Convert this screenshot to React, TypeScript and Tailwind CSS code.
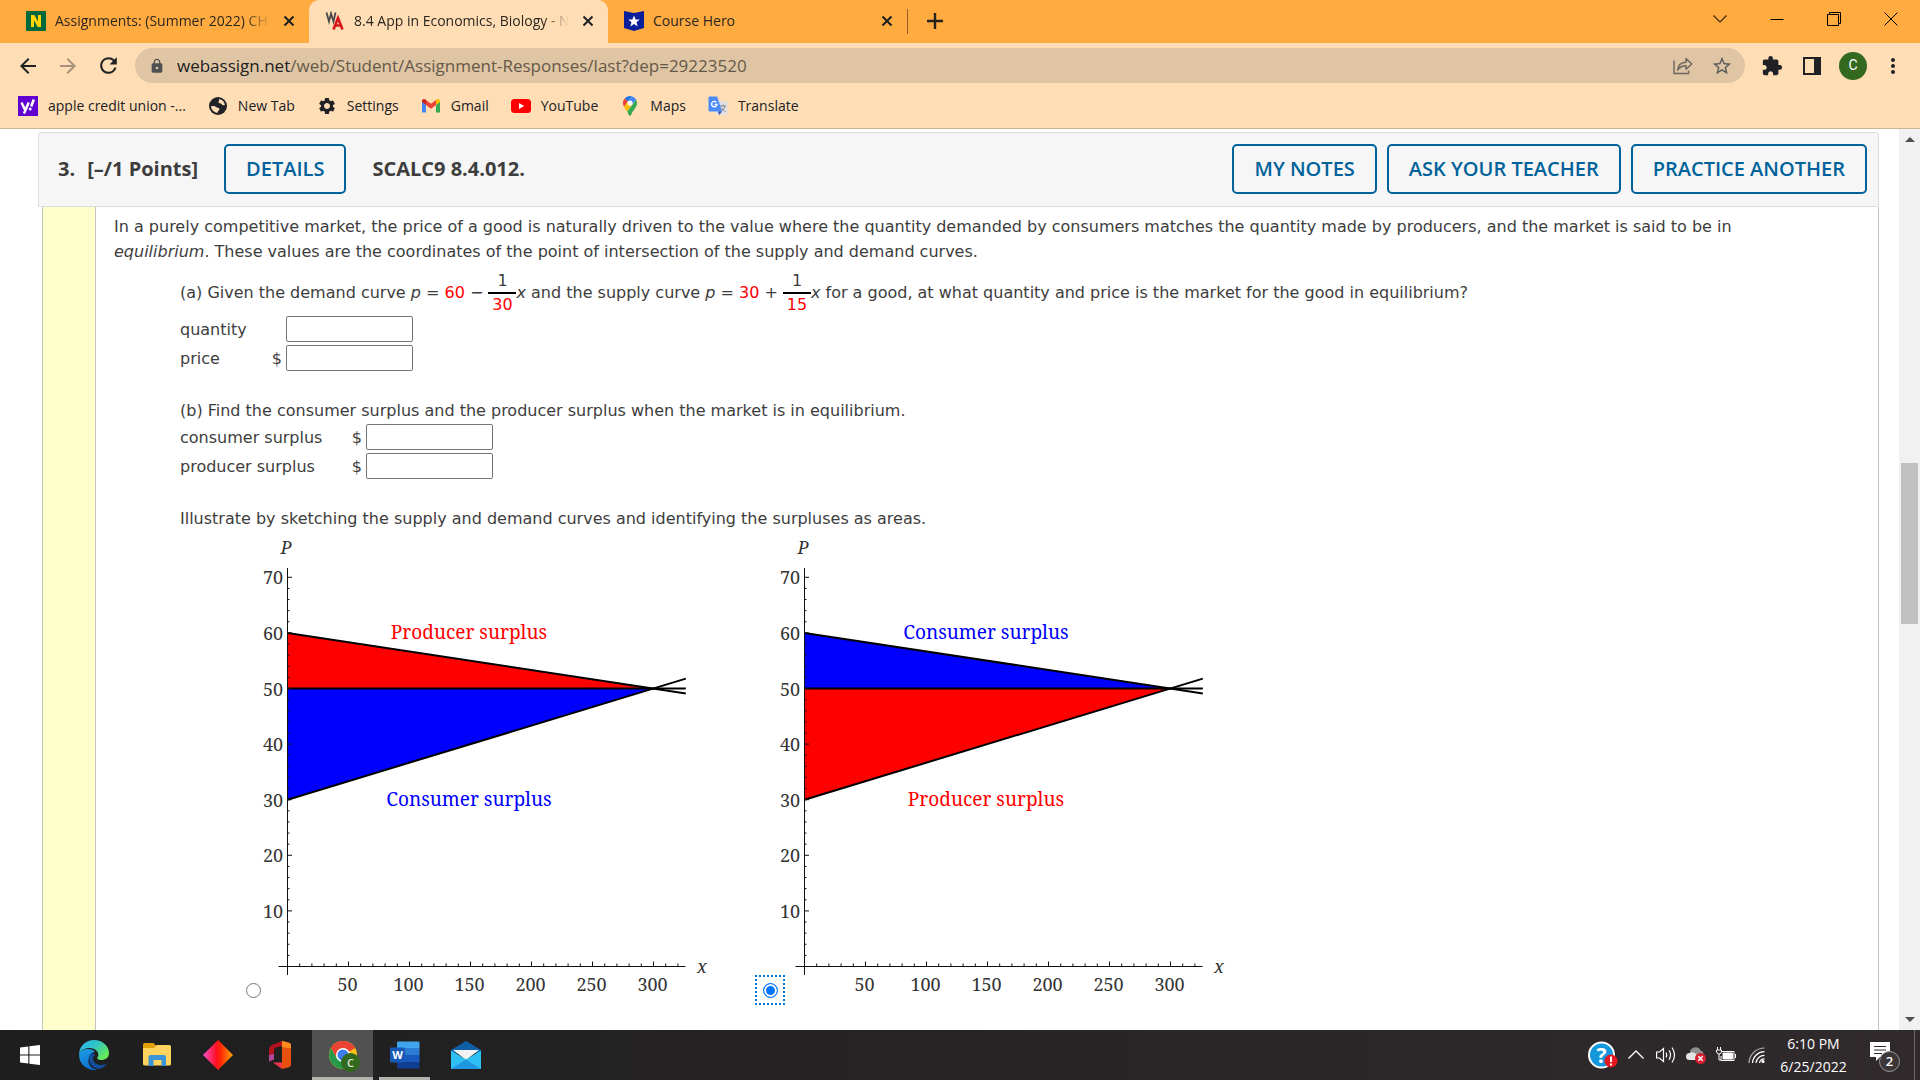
import { type ReactNode } from "react";
import {
  MdArrowBack,
  MdArrowForward,
  MdExtension,
  MdLock,
  MdMoreVert,
  MdRefresh,
  MdSettings,
  MdStarBorder
} from "react-icons/md";

const UI_FONT = "font-['Segoe_UI','Open_Sans',sans-serif]";
const BODY_FONT = "font-['Verdana','DejaVu_Sans',sans-serif]";

/* ---------- small logos ---------- */

function NLogo() {
  return (
    <svg viewBox="0 0 20 20" className="size-5 shrink-0">
      <rect width="20" height="20" rx="1" fill="#00683a" />
      <path d="M5 16V4h3.4l3.6 6.6V4h3v12h-3.3L8 9.3V16z" fill="#ffd200" />
    </svg>
  );
}

function WebAssignLogo() {
  return (
    <svg viewBox="0 0 20 20" className="size-5 shrink-0" fill="none">
      <path d="M1.500 1.500l2.500 9 2-8 2.500 8 2-9" stroke="#4a4a4a" strokeWidth="1.800" />
      <path d="M8.500 18.500L13 7l4.500 11.500M10.500 14.500h6" stroke="#d8151b" strokeWidth="2.600" />
    </svg>
  );
}

function CourseHeroLogo() {
  return (
    <svg viewBox="0 0 20 20" className="size-5 shrink-0">
      <path d="M0 0l10 2 10-2v17l-10 3-10-3z" fill="#0a1e9c" />
      <path d="M10 4.500l1.600 4h4.200l-3.300 2.700 1.200 4.200L10 13l-3.700 2.400 1.200-4.200-3.300-2.700h4.200z" fill="#fff" />
    </svg>
  );
}

function YahooLogo() {
  return (
    <svg viewBox="0 0 20 20" className="size-5 shrink-0" fill="none">
      <rect width="20" height="20" fill="#6001d2" />
      <path d="M3.500 6.500l3.400 7M10.700 6.500L6 17.500" stroke="#fff" strokeWidth="2.500" />
      <path d="M15.800 3.500l-2.600 7" stroke="#fff" strokeWidth="2.600" />
      <circle cx="12.200" cy="13" r="1.500" fill="#fff" />
    </svg>
  );
}

function GlobeIcon() {
  return (
    <svg viewBox="0 0 20 20" className="size-5 shrink-0">
      <circle cx="10" cy="10" r="9" fill="#202124" />
      <path d="M11 3a7 7 0 0 1 5.900 6c-1.400.6-2.600 0-3.400-1-.8-.9-2.500-.3-3-1.500-.5-1.300 1.200-1.600.5-3.500z" fill="#ffdeb6" />
      <path d="M3 10.300c2-.6 4-.3 5 .7 1 .9 3.500.5 3.400 2.300-.1 1.500-1.900 1.500-1.900 3.600A7 7 0 0 1 3 10.300z" fill="#ffdeb6" />
    </svg>
  );
}

function GmailLogo() {
  return (
    <svg viewBox="0 0 20 20" className="size-5 shrink-0">
      <path d="M1 5v11.500h4V9z" fill="#4285f4" />
      <path d="M19 5v11.500h-4V9z" fill="#34a853" />
      <path d="M1 5c0-2 2-2.600 3.500-1.500L5 4v5L1 6z" fill="#c5221f" />
      <path d="M19 5c0-2-2-2.600-3.500-1.500L15 4v5l4-3z" fill="#fbbc04" />
      <path d="M5 4l5 3.800L15 4v5l-5 3.800L5 9z" fill="#ea4335" />
    </svg>
  );
}

function YouTubeLogo() {
  return (
    <svg viewBox="0 0 20 20" className="size-5 shrink-0">
      <rect y="3" width="20" height="14" rx="3.500" fill="#f00" />
      <path d="M8 7l5.200 3L8 13z" fill="#fff" />
    </svg>
  );
}

function MapsLogo() {
  return (
    <svg viewBox="0 0 20 20" className="size-5 shrink-0">
      <path d="M10 0a7 7 0 0 0-5.400 2.500L8 5.400 12.200.4A7 7 0 0 0 10 0z" fill="#1a73e8" />
      <path d="M4.600 2.500A7 7 0 0 0 3 7c0 1.500.4 2.800 1 3.900L8 5.400z" fill="#ea4335" />
      <path d="M12.200.4L8 5.400a2.700 2.700 0 0 1 4 3.400L16.200 3.800a7 7 0 0 0-4-3.400z" fill="#4285f4" />
      <path d="M4 10.900c.8 1.600 2 2.800 3.200 4.600L12 8.800A2.700 2.700 0 0 1 8 5.400z" fill="#fbbc04" />
      <path d="M16.200 3.800L7.200 15.500c1.300 2 1.600 4.500 2.800 4.500s1.500-2.500 2.800-4.500C14.700 12.700 17 10.800 17 7c0-1.200-.3-2.300-.8-3.200z" fill="#34a853" />
      <circle cx="10" cy="7" r="2.600" fill="#fff" />
    </svg>
  );
}

function TranslateLogo() {
  return (
    <svg viewBox="0 0 20 20" className="size-5 shrink-0" fill="none">
      <rect x="8" y="5" width="11.500" height="14" rx="1" fill="#dfe1e5" />
      <path d="M12 10h6M15 8.500V10M17 10c-.5 2.500-2.500 4.500-4 5.500M13.500 12c1 1.500 2.500 3 4 3.500" stroke="#7f868c" />
      <path d="M1.500.5h7.700L14 15.500H1.500a1 1 0 0 1-1-1v-13a1 1 0 0 1 1-1z" fill="#4c8bf5" />
      <path d="M10 15.500h4L11.300 19z" fill="#3748ac" />
      <path d="M8.300 6.300A2.700 2.700 0 1 0 9 8.300H6.500" stroke="#fff" strokeWidth="1.300" />
    </svg>
  );
}

/* ---------- browser chrome ---------- */

function CloseIcon() {
  return (
    <svg viewBox="0 0 12 12" className="size-3" stroke="#1f2023" strokeWidth="2">
      <path d="M1.500 1.500l9 9M10.500 1.500l-9 9" />
    </svg>
  );
}

type TabProps = { icon: ReactNode; title: string; active?: boolean; fade?: boolean };

function Tab({ icon, title, active, fade }: TabProps) {
  return (
    <div
      className={`flex h-[43px] w-[299px] items-center gap-[9px] pb-[2px] pl-4 pr-[14px] ${
        active ? "rounded-t-[10px] bg-[#ffdeb6]" : ""
      }`}
    >
      {icon}
      <span
        className={`min-w-0 flex-1 overflow-hidden whitespace-nowrap text-[14px] leading-5 text-[#2b2620] ${
          fade ? "[mask-image:linear-gradient(to_right,black_88%,transparent)]" : ""
        }`}
      >
        {title}
      </span>
      <button aria-label="Close tab" className="ml-1">
        <CloseIcon />
      </button>
    </div>
  );
}

function TabStrip() {
  return (
    <div className="flex h-[43px] items-center bg-[#ffab40]">
      <div className="w-[10px] shrink-0" />
      <Tab icon={<NLogo />} title="Assignments: (Summer 2022) CHI" fade />
      <Tab icon={<WebAssignLogo />} title="8.4 App in Economics, Biology - N" active fade />
      <Tab icon={<CourseHeroLogo />} title="Course Hero" />
      <div className="h-[25px] w-px bg-[#8f6126]" />
      <button aria-label="New tab" className="ml-[19px] pb-[2px]">
        <svg viewBox="0 0 16 16" className="size-4" stroke="#26221c" strokeWidth="2.400">
          <path d="M8 0v16M0 8h16" />
        </svg>
      </button>
      <div className="ml-auto flex pb-[6px]">
        <button aria-label="Search tabs" className="flex w-[57px] justify-center">
          <svg viewBox="0 0 14 14" className="size-[14px]" fill="none" stroke="#3a2a14" strokeWidth="1.200">
            <path d="M.5 3.500L7 10l6.500-6.500" />
          </svg>
        </button>
        <button aria-label="Minimize" className="flex w-[57px] justify-center">
          <svg viewBox="0 0 14 14" className="size-[14px]" stroke="#000">
            <path d="M.5 7.500h13" />
          </svg>
        </button>
        <button aria-label="Restore" className="flex w-[57px] justify-center">
          <svg viewBox="0 0 14 14" className="size-[14px]" fill="none" stroke="#000">
            <path d="M.5 2.500h11v11H.5zM2.500 2.500v-2h11v11h-2" />
          </svg>
        </button>
        <button aria-label="Close" className="flex w-[58px] justify-center">
          <svg viewBox="0 0 14 14" className="size-[14px]" stroke="#000">
            <path d="M.5.5l13 13M13.500.5l-13 13" />
          </svg>
        </button>
      </div>
    </div>
  );
}

function Toolbar() {
  return (
    <div className="flex h-[45px] items-center pl-4 pr-[15px] text-[#202124]">
      <button aria-label="Back">
        <MdArrowBack size={24} />
      </button>
      <button aria-label="Forward" className="ml-4 text-[#a8917a]">
        <MdArrowForward size={24} />
      </button>
      <button aria-label="Reload" className="ml-4">
        <MdRefresh size={25} />
      </button>
      <div className="ml-[14px] flex h-[35px] min-w-0 flex-1 items-center rounded-full bg-[#dfc5a3] pl-[14px] pr-3">
        <MdLock size={16} className="text-[#4f5054]" />
        <div className="ml-3 flex-1 whitespace-nowrap text-[17px] leading-6 text-[#65594a]">
          <span className="text-[#202124]">webassign.net</span>
          /web/Student/Assignment-Responses/last?dep=29223520
        </div>
        <button aria-label="Share this page">
          <svg viewBox="0 0 20 20" className="size-5" fill="none" stroke="#6a6661" strokeWidth="1.400">
            <path d="M1 4.500v13h14.500v-3" />
            <path d="M4.500 14C5 9 8 6.500 13 6.200V2.500l5.800 5.500-5.800 5.300V9.800c-3.500 0-6 1-8.500 4.200z" strokeLinejoin="round" />
          </svg>
        </button>
        <button aria-label="Bookmark this page" className="ml-[18px]">
          <MdStarBorder size={22} className="text-[#5b5b5e]" />
        </button>
      </div>
      <button aria-label="Extensions" className="ml-4">
        <MdExtension size={22} />
      </button>
      <button aria-label="Side panel" className="ml-5">
        <svg viewBox="0 0 18 18" className="size-[18px]">
          <path d="M0 0h18v18H0zM2 2v14h9V2z" fill="#202124" fillRule="evenodd" />
        </svg>
      </button>
      <button
        aria-label="Profile"
        className="ml-[18px] flex size-7 items-center justify-center rounded-full bg-[#33691e] text-[14px] text-white font-[Roboto,sans-serif]"
      >
        C
      </button>
      <button aria-label="Menu" className="ml-[14px]">
        <MdMoreVert size={24} />
      </button>
    </div>
  );
}

const bookmarks = [
  { label: "apple credit union -...", icon: <YahooLogo /> },
  { label: "New Tab", icon: <GlobeIcon /> },
  { label: "Settings", icon: <MdSettings size={20} /> },
  { label: "Gmail", icon: <GmailLogo /> },
  { label: "YouTube", icon: <YouTubeLogo /> },
  { label: "Maps", icon: <MapsLogo /> },
  { label: "Translate", icon: <TranslateLogo /> }
];

function BookmarksBar() {
  return (
    <nav className="flex h-[41px] items-center gap-[22px] border-b border-[#cdb497] pb-1 pl-[18px] text-[#202124]">
      {bookmarks.map(b => (
        <a key={b.label} href="#" className="flex items-center gap-[10px] whitespace-nowrap text-[14px] leading-5">
          {b.icon}
          {b.label}
        </a>
      ))}
    </nav>
  );
}

/* ---------- question ---------- */

function OutlineButton({ children }: { children: ReactNode }) {
  return (
    <button className="h-[50px] rounded-[5px] border-2 border-[#00629b] px-5 text-[20px] font-semibold text-[#00629b]">
      {children}
    </button>
  );
}

function QuestionHeader() {
  return (
    <header className="flex h-[75px] items-center gap-[10px] rounded-t-[3px] border border-[#dcdcdc] bg-[#f6f6f6] pb-[2px] pl-[19px] pr-[11px] font-['Open_Sans',sans-serif] text-[20px] text-[#3d3d3d]">
      <h2 className="flex gap-3 whitespace-nowrap pr-4 font-bold">
        <span>3.</span>
        <span>[–/1 Points]</span>
      </h2>
      <OutlineButton>DETAILS</OutlineButton>
      <span className="flex-1 whitespace-nowrap pl-4 font-bold">SCALC9 8.4.012.</span>
      <OutlineButton>MY NOTES</OutlineButton>
      <OutlineButton>ASK YOUR TEACHER</OutlineButton>
      <OutlineButton>PRACTICE ANOTHER</OutlineButton>
    </header>
  );
}

function Fraction({ top, bottom }: { top: string; bottom: string }) {
  return (
    <span className="inline-flex w-7 flex-col text-center align-middle leading-[22px]">
      <span className="border-b-2 border-black">{top}</span>
      <span className="text-[#ff0000]">{bottom}</span>
    </span>
  );
}

type FieldProps = { id: string; label: string; dollar?: boolean; wide?: boolean };

function Field({ id, label, dollar, wide }: FieldProps) {
  return (
    <div className="flex h-[26px] items-center">
      <div className={`flex justify-between pr-1 ${wide ? "w-[186px]" : "w-[106px]"}`}>
        <label htmlFor={id}>{label}</label>
        {dollar && <span>$</span>}
      </div>
      <input id={id} type="text" className="h-[26px] w-[127px] rounded-[2px] border border-[#767676] bg-white px-1" />
    </div>
  );
}

const xScale = (v: number) => 27.5 + v * 1.22;
const yScale = (v: number) => 431.5 - v * 5.56;
const range = (from: number, to: number, step: number) =>
  Array.from({ length: Math.floor((to - from) / step) + 1 }, (_, i) => from + i * step);

type PlotProps = { topLabel: string; topColor: string; bottomLabel: string; bottomColor: string };

function SurplusPlot({ topLabel, topColor, bottomLabel, bottomColor }: PlotProps) {
  const points = (list: number[][]) => list.map(([x, y]) => `${xScale(x)},${yScale(y)}`).join(" ");

  return (
    <svg
      viewBox="0 0 452 470"
      className="h-[470px] w-[452px] shrink-0 font-['Noto_Serif','DejaVu_Serif',serif] text-[18px]"
      fill="#333"
    >
      <polygon points={points([[0, 60], [300, 50], [0, 50]])} fill={topColor} />
      <polygon points={points([[0, 50], [300, 50], [0, 30]])} fill={bottomColor} />
      <g stroke="#000" strokeWidth="2">
        <polyline points={points([[0, 60], [326.5, 49.1]])} />
        <polyline points={points([[0, 50], [326.5, 50]])} />
        <polyline points={points([[0, 30], [326.5, 51.77]])} />
      </g>
      <g stroke="#111">
        <path d="M27.500 33v407M18.500 431.500h407" />
        {range(2, 70, 2).map(v => (
          <path key={v} d={`M27.500 ${yScale(v)}h${v % 10 === 0 ? 4.5 : 2}`} />
        ))}
        {range(10, 320, 10).map(v => (
          <path key={v} d={`M${xScale(v)} 431.500v${v % 50 === 0 ? -5 : -3}`} />
        ))}
      </g>
      {range(10, 70, 10).map(v => (
        <text key={v} x="23" y={yScale(v) + 7} textAnchor="end">
          {v}
        </text>
      ))}
      {range(50, 300, 50).map(v => (
        <text key={v} x={xScale(v) - 1} y="456" textAnchor="middle">
          {v}
        </text>
      ))}
      <text x="26" y="19" textAnchor="middle" fontStyle="italic">
        P
      </text>
      <text x="442" y="438" textAnchor="middle" fontStyle="italic">
        x
      </text>
      <text x="209" y="104" textAnchor="middle" fontSize="19" fill={topColor}>
        {topLabel}
      </text>
      <text x="209" y="271" textAnchor="middle" fontSize="19" fill={bottomColor}>
        {bottomLabel}
      </text>
    </svg>
  );
}

const RED = "#ff0000";
const BLUE = "#0000ff";

function Question() {
  return (
    <main className={`min-w-0 flex-1 overflow-hidden pl-[38px] pr-[20px] pt-[3px] ${BODY_FONT}`}>
      <QuestionHeader />
      <div className="ml-1 flex border-x border-[#c4c4c4] text-[16px] leading-[25px] text-[#3d3d3d]">
        <div className="w-[53px] shrink-0 border-r border-[#c4c4c4] bg-[#ffffcc]" />
        <div className="min-w-0 flex-1 pb-10 pl-[18px] pr-[72px] pt-[7px]">
          <p>
            In a purely competitive market, the price of a good is naturally driven to the value where the quantity
            demanded by consumers matches the quantity made by producers, and the market is said to be in{" "}
            <i>equilibrium</i>. These values are the coordinates of the point of intersection of the supply and demand
            curves.
          </p>
          <div className="ml-[66px] pt-[6px]">
            <p>
              (a) Given the demand curve <i>p</i> = <span className="text-[#ff0000]">60</span> −{" "}
              <Fraction top="1" bottom="30" />
              <i>x</i> and the supply curve <i>p</i> = <span className="text-[#ff0000]">30</span> +{" "}
              <Fraction top="1" bottom="15" />
              <i>x</i> for a good, at what quantity and price is the market for the good in equilibrium?
            </p>
            <div className="flex flex-col gap-[3px]">
              <Field id="quantity" label="quantity" />
              <Field id="price" label="price" dollar />
            </div>
            <p className="mt-[27px]">
              (b) Find the consumer surplus and the producer surplus when the market is in equilibrium.
            </p>
            <div className="mt-px flex flex-col gap-[3px]">
              <Field id="consumer" label="consumer surplus" dollar wide />
              <Field id="producer" label="producer surplus" dollar wide />
            </div>
            <p className="mt-[27px]">
              Illustrate by sketching the supply and demand curves and identifying the surpluses as areas.
            </p>
            <div className="mt-1 flex pl-[58px]">
              <label className="flex w-[517px] items-end">
                <span className="flex size-[30px] shrink-0 items-center justify-center">
                  <input
                    type="radio"
                    name="sketch"
                    className="size-[15px] appearance-none rounded-full border border-[#767676] bg-white"
                  />
                </span>
                <span className="-ml-2">
                  <SurplusPlot
                    topLabel="Producer surplus"
                    topColor={RED}
                    bottomLabel="Consumer surplus"
                    bottomColor={BLUE}
                  />
                </span>
              </label>
              <label className="flex w-[517px] items-end">
                <span className="flex size-[30px] shrink-0 items-center justify-center border-2 border-dotted border-[#0078d7]">
                  <input
                    type="radio"
                    name="sketch"
                    defaultChecked
                    className="size-[15px] appearance-none rounded-full border border-[#0075ff] bg-[#0075ff] shadow-[inset_0_0_0_2px_white]"
                  />
                </span>
                <span className="-ml-2">
                  <SurplusPlot
                    topLabel="Consumer surplus"
                    topColor={BLUE}
                    bottomLabel="Producer surplus"
                    bottomColor={RED}
                  />
                </span>
              </label>
            </div>
          </div>
        </div>
      </div>
    </main>
  );
}

function ScrollBar() {
  return (
    <div className="flex w-[21px] shrink-0 flex-col items-center bg-[#f1f1f1] py-2">
      <svg viewBox="0 0 10 5" className="h-[5px] w-[10px]" fill="#505050">
        <path d="M5 0l5 5H0z" />
      </svg>
      <div className="w-full grow-[320] basis-0" />
      <div className="w-[17px] grow-[160] basis-0 bg-[#c1c1c1]" />
      <div className="w-full grow-[391] basis-0" />
      <svg viewBox="0 0 10 5" className="h-[5px] w-[10px]" fill="#505050">
        <path d="M0 0h10L5 5z" />
      </svg>
    </div>
  );
}

/* ---------- taskbar ---------- */

function WindowsIcon() {
  return (
    <svg viewBox="0 0 20 20" className="size-5" fill="#fff">
      <path d="M0 2.500L8.300 1.400v8.100H0zM9.400 1.200L20 0v9.500H9.400zM0 10.500h8.300v8.100L0 17.500zM9.400 10.500H20V20L9.400 18.800z" />
    </svg>
  );
}

function EdgeIcon() {
  return (
    <svg viewBox="0 0 30 30" className="size-[30px]">
      <defs>
        <linearGradient id="edgeTop" x1="0" y1="0" x2="1" y2="0.6">
          <stop offset="0" stopColor="#2fb4f0" />
          <stop offset="0.5" stopColor="#2fc3c9" />
          <stop offset="1" stopColor="#66eb59" />
        </linearGradient>
        <linearGradient id="edgeLeft" x1="0" y1="0" x2="0.4" y2="1">
          <stop offset="0" stopColor="#1fa0e8" />
          <stop offset="1" stopColor="#0b6fd0" />
        </linearGradient>
      </defs>
      <path d="M0 15C0 6.500 6.500 0 15 0s15 6 15 13c0 5-4 7-7.500 7-3 0-5-1-4-2.500 3-4.500-2-9.500-8-9.500C6 8 1 10 0 15z" fill="url(#edgeTop)" />
      <path d="M0 15a15 15 0 0 0 18 14.700C11 29 7 22 11 15c1-2 3-3 5-3-2-4-14-5-16 3z" fill="url(#edgeLeft)" />
      <path d="M10.500 16c-2 7 4 14 11 12.500 3-.8 5-3 6.500-5-5 3-14 1.500-14-5 0-1.700.8-2.700 2-3.500-1.500-2-4.500-2-5.500 1z" fill="#114f9e" />
    </svg>
  );
}

function FolderIcon() {
  return (
    <svg viewBox="0 0 28 24" className="h-6 w-7">
      <path d="M0 1.500Q0 0 1.500 0h9L13 2.500V6H0z" fill="#e0a10a" />
      <path d="M0 5h11l2.500-3H26.500Q28 2 28 3.500V21q0 1.500-1.500 1.500h-25Q0 22.500 0 21z" fill="#ffd35e" />
      <path d="M5.500 23V14q0-2 2-2h13.500q2 0 2 2v9h-4.500v-6h-8v6z" fill="#3a94d8" />
    </svg>
  );
}

function DiamondIcon() {
  return (
    <svg viewBox="0 0 30 30" className="size-[30px]">
      <defs>
        <linearGradient id="diamond">
          <stop offset="0" stopColor="#ff4fd0" />
          <stop offset="0.45" stopColor="#ff1020" />
          <stop offset="0.6" stopColor="#ff2a08" />
          <stop offset="1" stopColor="#ffa800" />
        </linearGradient>
      </defs>
      <path d="M15 0l15 15-15 15L0 15z" fill="url(#diamond)" />
    </svg>
  );
}

function OfficeIcon() {
  return (
    <svg viewBox="0 0 24 28" className="h-7 w-6">
      <path d="M14 0L4 4Q1 5.500 1 8v12.500l5-2V9q0-2 2-2.500L14 5z" fill="#b5121f" />
      <path d="M1 14v6.500L6 18.500V13z" fill="#b0479a" />
      <path d="M14 0l7 1.800q2 .7 2 2.700v19q0 2-2 2.700L14 28z" fill="#e8500e" />
      <path d="M14 0l7 1.800q2 .7 2 2.700v3L14 6z" fill="#ff8a1c" />
      <path d="M5 21.500h9V28z" fill="#f0354b" />
    </svg>
  );
}

function ChromeIcon() {
  return (
    <svg viewBox="0 0 32 32" className="size-8">
      <circle cx="14" cy="14" r="14" fill="#fbc116" />
      <path d="M14 14L1.900 7A14 14 0 0 1 26.100 7z" fill="#ea4335" />
      <path d="M14 7h12.100A14 14 0 0 0 1.900 7L8 17.500z" fill="#ea4335" />
      <path d="M1.900 7a14 14 0 0 0 12.100 21l6-10.500L8 17.500z" fill="#27994a" />
      <circle cx="14" cy="14" r="7" fill="#fff" />
      <circle cx="14" cy="14" r="5.500" fill="#3b7ded" />
      <circle cx="21.500" cy="21.500" r="9.500" fill="#33691e" />
      <text x="21.500" y="25.500" textAnchor="middle" fontSize="11" fontWeight="600" fill="#dfe8da">
        C
      </text>
    </svg>
  );
}

function WordIcon() {
  return (
    <svg viewBox="0 0 30 28" className="h-7 w-[30px]">
      <path d="M7 1.500Q7 .5 8 .5h20.500q1 0 1 1V7H7z" fill="#41a5ee" />
      <path d="M7 7h22.500v7H7z" fill="#2b7cd3" />
      <path d="M7 14h22.500v7H7z" fill="#185abd" />
      <path d="M7 21h22.500v5.500q0 1-1 1H8q-1 0-1-1z" fill="#103f91" />
      <rect y="6.500" width="15" height="15" rx="1" fill="#1859b8" />
      <text x="7.500" y="18" textAnchor="middle" fontSize="11" fontWeight="700" fill="#fff">
        W
      </text>
    </svg>
  );
}

function MailIcon() {
  return (
    <svg viewBox="0 0 30 28" className="h-7 w-[30px]">
      <path d="M15 0l15 9v3H0V9z" fill="#0f5ea8" />
      <path d="M2 9h26L15 19z" fill="#f3f3f3" />
      <path d="M0 9.500l15 9 15-9V28H0z" fill="#2fc0f3" />
      <path d="M15 18.500L30 28H0z" fill="#1f97e0" />
    </svg>
  );
}

function Tray() {
  return (
    <div className="flex items-center text-white">
      <button aria-label="Help">
        <svg viewBox="0 0 30 28" className="h-7 w-[30px]">
          <circle cx="13.500" cy="14" r="12.500" fill="#1597dc" stroke="#fff" strokeWidth="2" />
          <text x="13.500" y="21.500" textAnchor="middle" fontSize="21" fontWeight="700" fill="#fff">
            ?
          </text>
          <circle cx="23" cy="20" r="6.500" fill="#e5171f" />
          <path d="M23 15.500v5.500M23 22.500v2" stroke="#fff" strokeWidth="2" />
        </svg>
      </button>
      <button aria-label="Show hidden icons" className="ml-[10px]">
        <svg viewBox="0 0 16 16" className="size-4" fill="none" stroke="#fff" strokeWidth="1.300">
          <path d="M.5 11.500L8 4l7.500 7.500" />
        </svg>
      </button>
      <button aria-label="Volume" className="ml-3">
        <svg viewBox="0 0 20 18" className="h-[18px] w-5" fill="none" stroke="#fff" strokeWidth="1.200">
          <path d="M.6 6h2.800L7.500 2.500v13L3.400 12H.6z" />
          <path d="M10 6.500q1.500 2.500 0 5M13 4.300q3 4.700 0 9.400M16 1.500q5 7.500 0 15" />
        </svg>
      </button>
      <button aria-label="Cloud storage" className="ml-[10px]">
        <svg viewBox="0 0 20 18" className="h-[18px] w-5">
          <path d="M4 7a5.500 5.500 0 0 1 10.500-2.500Q18 5 17.500 10L5 14z" fill="#8f8f8f" />
          <path d="M3.500 14a3.500 3.500 0 0 1 0-7Q8 5 11 9l1 5z" fill="#e4e4e4" />
          <circle cx="14.500" cy="12.500" r="5.500" fill="#d5202f" />
          <path d="M12.300 10.300l4.400 4.400M16.700 10.300l-4.400 4.400" stroke="#fff" strokeWidth="1.500" />
        </svg>
      </button>
      <button aria-label="Battery" className="ml-[10px]">
        <svg viewBox="0 0 20 16" className="h-4 w-5" fill="none" stroke="#fff">
          <path d="M5.500 4.500h12.500v9h-13V9M19.500 7v4M1.500 0v3M4.500 0v3M.5 3h5v2L4 7H2L.5 5zM3 7v6h2" />
          <path d="M7 6h9.500v6H7z" fill="#fff" />
        </svg>
      </button>
      <button aria-label="Network" className="ml-3">
        <svg viewBox="0 0 18 18" className="size-[18px]" fill="none" stroke="#fff" strokeWidth="1.200">
          <path d="M1 17A15.500 15.500 0 0 1 16.500 2" stroke="#b5b2b3" />
          <path d="M4.500 17A12 12 0 0 1 16.500 5.700M8 17a8.500 8.500 0 0 1 8.500-7.700M11.500 17a5 5 0 0 1 5-4.200" />
          <circle cx="15" cy="15.500" r="1" fill="#fff" />
        </svg>
      </button>
      <button className="ml-3 flex w-[71px] flex-col items-center whitespace-nowrap text-[14px] leading-[23px]">
        <span>6:10 PM</span>
        <span>6/25/2022</span>
      </button>
      <button aria-label="Notifications" className="ml-5 pt-1">
        <svg viewBox="0 0 32 32" className="size-8">
          <path d="M1 1h20v15H11l-4 4v-4H1z" fill="#fff" />
          <path d="M5 5.500h12M5 9h12M5 12.500h8" stroke="#302a2c" strokeWidth="1.200" />
          <circle cx="20.500" cy="20.500" r="10" fill="#3c3638" stroke="#9b9899" />
          <text x="20.500" y="25" textAnchor="middle" fontSize="13" fontWeight="600" fill="#fff">
            2
          </text>
        </svg>
      </button>
      <div className="ml-[13px] mr-[5px] h-[50px] w-px bg-[#6d6869]" />
    </div>
  );
}

function Taskbar() {
  return (
    <footer className="flex h-[50px] shrink-0 justify-between bg-linear-to-r from-[#1e1e1e] to-[#302a2c]">
      <div className="flex">
        <button aria-label="Start" className="flex w-[60px] items-center justify-center">
          <WindowsIcon />
        </button>
        <button aria-label="Edge" className="flex w-[68px] items-center justify-center">
          <EdgeIcon />
        </button>
        <button aria-label="File Explorer" className="flex w-[57px] items-center justify-center">
          <FolderIcon />
        </button>
        <button aria-label="Diamond app" className="flex w-[66px] items-center justify-center">
          <DiamondIcon />
        </button>
        <button aria-label="Office" className="mr-1 flex w-[57px] items-center justify-center">
          <OfficeIcon />
        </button>
        <button
          aria-label="Chrome"
          className="flex w-[61px] items-center justify-center border-b-[3px] border-[#b5b2ae] bg-[#515151] pl-1 pt-[7px]"
        >
          <ChromeIcon />
        </button>
        <button
          aria-label="Word"
          className="ml-[6px] flex w-[51px] items-center justify-center border-b-[3px] border-[#b5b2ae] pt-[3px]"
        >
          <WordIcon />
        </button>
        <button aria-label="Mail" className="ml-[6px] flex w-[60px] items-center justify-center">
          <MailIcon />
        </button>
      </div>
      <Tray />
    </footer>
  );
}

export default function App() {
  return (
    <div className={`flex h-screen flex-col overflow-hidden bg-white ${UI_FONT}`}>
      <div className="shrink-0 bg-[#ffdeb6]">
        <TabStrip />
        <Toolbar />
        <BookmarksBar />
      </div>
      <div className="flex min-h-0 flex-1">
        <Question />
        <ScrollBar />
      </div>
      <Taskbar />
    </div>
  );
}
